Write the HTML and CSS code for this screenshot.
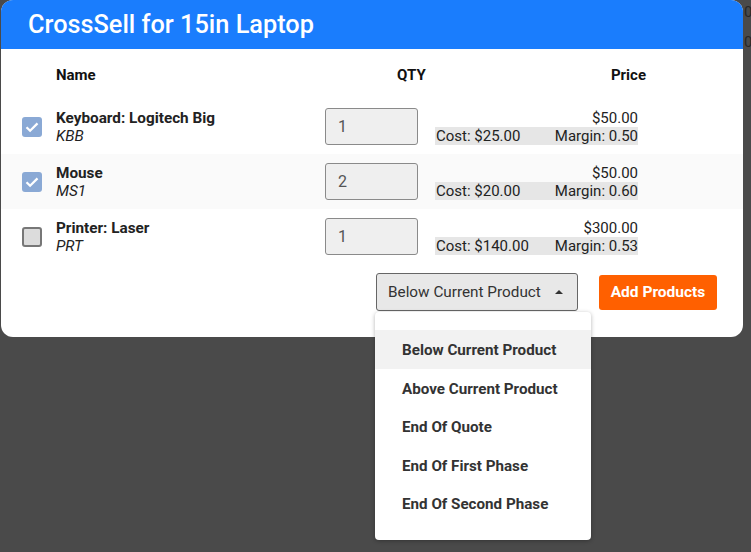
FILE: index.html
```html
<!DOCTYPE html>
<html>
<head>
<meta charset="utf-8">
<link rel="stylesheet" href="styles.css">
</head>
<body>
<div class="backdrop-text">
  <span class="bg-digit bg-digit-1">0</span>
  <span class="bg-digit bg-digit-2">0</span>
</div>
<div class="dialog">
  <div class="dialog-header">CrossSell for 15in Laptop</div>
  <div class="col-head">
    <span>Name</span>
    <span>QTY</span>
    <span class="col-price">Price</span>
  </div>
  <div class="rows">
    <div class="row">
      <span class="cb cb-on"><svg viewBox="0 0 20 20" width="20" height="20"><path d="M4.5 10.2l3.6 3.6L15.5 6.4" fill="none" stroke="#fff" stroke-width="2.2"/></svg></span>
      <div class="name"><div class="name-main">Keyboard: Logitech Big</div><div class="name-code">KBB</div></div>
      <div class="qty">1</div>
      <div class="price"><div class="price-main">$50.00</div><div class="price-sub"><span>Cost: $25.00</span><span>Margin: 0.50</span></div></div>
    </div>
    <div class="row row-alt">
      <span class="cb cb-on"><svg viewBox="0 0 20 20" width="20" height="20"><path d="M4.5 10.2l3.6 3.6L15.5 6.4" fill="none" stroke="#fff" stroke-width="2.2"/></svg></span>
      <div class="name"><div class="name-main">Mouse</div><div class="name-code">MS1</div></div>
      <div class="qty">2</div>
      <div class="price"><div class="price-main">$50.00</div><div class="price-sub"><span>Cost: $20.00</span><span>Margin: 0.60</span></div></div>
    </div>
    <div class="row">
      <span class="cb cb-off"></span>
      <div class="name"><div class="name-main">Printer: Laser</div><div class="name-code">PRT</div></div>
      <div class="qty">1</div>
      <div class="price"><div class="price-main">$300.00</div><div class="price-sub"><span>Cost: $140.00</span><span>Margin: 0.53</span></div></div>
    </div>
  </div>
  <div class="footer">
    <div class="select-wrap">
      <div class="select"><span>Below Current Product</span><span class="tri"></span></div>
      <div class="menu">
        <div class="menu-item active">Below Current Product</div>
        <div class="menu-item">Above Current Product</div>
        <div class="menu-item">End Of Quote</div>
        <div class="menu-item">End Of First Phase</div>
        <div class="menu-item">End Of Second Phase</div>
      </div>
    </div>
    <div class="btn">Add Products</div>
  </div>
</div>
</body>
</html>
```
FILE: styles.css
```css
html, body {
  margin: 0;
  padding: 0;
}
body {
  background: #4a4a4a;
  font-family: Roboto, "Liberation Sans", sans-serif;
  width: 751px;
  height: 552px;
  overflow: hidden;
  position: relative;
}
.backdrop-text {
  position: absolute;
  left: 744px;
  top: 0;
  width: 10px;
  height: 60px;
  color: #262626;
  font-size: 15px;
}
.bg-digit {
  position: absolute;
  left: 0;
}
.bg-digit-1 { top: 3px; }
.bg-digit-2 { top: 33px; }
.dialog {
  position: relative;
  margin-left: 1px;
  width: 742px;
  background: #fff;
  border-radius: 12px;
  padding-bottom: 26px;
}
.dialog-header {
  height: 49px;
  background: #1a7dfd;
  border-radius: 12px 12px 0 0;
  color: #fff;
  font-size: 25.3px;
  font-weight: 500;
  line-height: 49px;
  padding-left: 27px;
}
.col-head {
  display: grid;
  grid-template-columns: 341px 100px 149px;
  padding-left: 55px;
  margin-top: 16px;
  margin-bottom: 14px;
  height: 20px;
  line-height: 20px;
  font-size: 15px;
  font-weight: 700;
  color: #111;
}
.col-price { text-align: right; }
.row {
  display: grid;
  grid-template-columns: 34px 269px 93px 203px;
  align-items: center;
  height: 55px;
  padding-left: 21px;
}
.row-alt { background: #fafafa; }
.cb {
  width: 20px;
  height: 20px;
  border-radius: 3px;
  box-sizing: border-box;
  display: block;
}
.cb svg { display: block; }
.cb-on { background: #8aa9d5; }
.cb-off { background: #dcdcdc; border: 2px solid #777; }
.name { color: #222; font-size: 15.3px; }
.name-main { font-weight: 700; line-height: 18px; }
.name-code { font-style: italic; line-height: 18px; }
.qty {
  width: 93px;
  height: 37px;
  box-sizing: border-box;
  border: 1px solid #8a8a8a;
  border-radius: 3px;
  background: #efefef;
  font-size: 16px;
  color: #555;
  line-height: 35px;
  padding-left: 12px;
}
.price {
  margin-left: 17px;
  width: 203px;
  font-size: 15px;
  color: #222;
}
.price-main { text-align: right; line-height: 18px; }
.price-sub {
  display: flex;
  justify-content: space-between;
  background: #e6e6e6;
  line-height: 18px;
  padding-left: 1px;
}
.footer {
  display: flex;
  justify-content: flex-end;
  align-items: center;
  gap: 21px;
  margin-top: 9px;
  padding-right: 26px;
}
.select-wrap { position: relative; }
.select {
  width: 202px;
  height: 38px;
  box-sizing: border-box;
  border: 1px solid #666;
  border-radius: 3px;
  background: #e8e8e8;
  display: flex;
  align-items: center;
  justify-content: space-between;
  padding-left: 11px;
  padding-right: 14px;
  font-size: 15.3px;
  color: #333;
}
.tri {
  width: 0;
  height: 0;
  border-left: 4px solid transparent;
  border-right: 4px solid transparent;
  border-bottom: 4px solid #333;
}
.menu {
  position: absolute;
  top: 39px;
  left: -1px;
  width: 216px;
  background: #fff;
  border-radius: 4px;
  box-shadow: 0 1px 4px rgba(0,0,0,0.3);
  padding-top: 18px;
  padding-bottom: 17px;
}
.menu-item {
  height: 38.6px;
  line-height: 40px;
  padding-left: 27px;
  font-size: 15.2px;
  font-weight: 700;
  color: #333;
}
.menu-item.active { background: #f2f2f2; }
.btn {
  width: 118px;
  box-sizing: border-box;
  text-align: center;
  height: 35px;
  line-height: 35px;
  background: #ff6000;
  color: #fff;
  font-size: 15.5px;
  font-weight: 700;
  border-radius: 3px;
}
```
